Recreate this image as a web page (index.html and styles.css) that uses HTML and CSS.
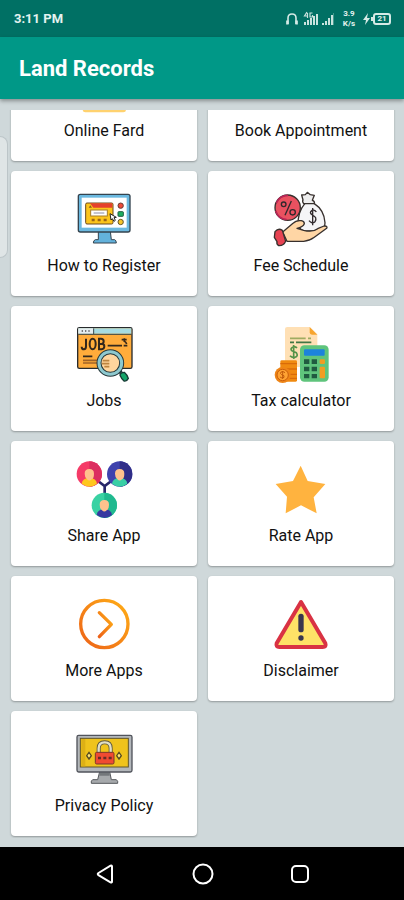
FILE: index.html
```
<!DOCTYPE html>
<html lang="en">
<head>
<meta charset="utf-8">
<meta name="viewport" content="width=device-width, initial-scale=1">
<title>Land Records</title>
<link rel="stylesheet" href="styles.css">
</head>
<body>
<div class="status">
  <span class="time">3:11 PM</span>
  <div class="indicators">
    <svg width="14" height="14" viewBox="0 0 14 14" fill="none" stroke="#d5eae6" stroke-width="1.6"><path d="M3 12V6Q3 2 7 2T11 6V12"/><path d="M2.400 8.500V12.500M11.600 8.500V12.500" stroke-width="2.500"/></svg>
    <svg width="32" height="18" viewBox="0 0 32 18" fill="#c9e3de"><path d="M1 12h2v3H1zM4 10h2v5H4zM7 8h2v7H7zM10 6h2v9h-2zM13 4h2v11h-2zM19 13h2v2h-2zM22 11h2v4h-2zM25 8h2v7h-2zM28 5h2v10h-2z"/><path d="M4 2L1.500 6H5M4.500 3v5M9.500 3H7v4h2.500V5" fill="none" stroke="#c9e3de" stroke-width="1.200"/><path d="M30 3h1v12h-1z" opacity=".35"/></svg>
    <span class="speed">3.9<br>K/s</span>
    <span class="battery"><svg width="10" height="12" viewBox="0 0 10 12" fill="#d5eae6"><path d="M5 0L0 7h3L2 12l5-7H4z"/><path d="M8 4h2v4H8z"/></svg><span class="level">21</span></span>
  </div>
</div>
<header class="appbar"><h1>Land Records</h1></header>
<main class="content">
  <div class="viewport">
    <div class="grid">
      <a class="card" href="#">
        <svg class="icon" viewBox="0 0 240 225"><rect x="56" y="60" width="130" height="142" rx="8" fill="#ffd26f"/></svg>
        <span>Online Fard</span>
      </a>
      <a class="card" href="#">
        <svg class="icon" viewBox="0 0 240 225"><rect x="56" y="60" width="130" height="125" rx="8" fill="#4aa6d8"/></svg>
        <span>Book Appointment</span>
      </a>
      <a class="card" href="#">
        <svg class="icon" viewBox="0 0 240 225">
          <path d="M103 154h36l3 25h10q5 2 5 10H88q0-8 6-10h9z" fill="#63b2dc" stroke="#34434e" stroke-width="3"/>
          <rect x="43" y="43" width="155" height="113" rx="6" fill="#6bb9e0" stroke="#34434e" stroke-width="4"/>
          <rect x="53" y="53" width="135" height="90" fill="#fff"/>
          <rect x="65" y="69" width="82" height="63" rx="4" fill="#fcc51c" stroke="#6a4a20" stroke-width="3"/>
          <path d="M78 70h67v13H88z" fill="#e5402d"/>
          <path d="M74 83l5-7 5 7z" fill="#8b5a17"/>
          <rect x="80" y="90" width="50" height="18" fill="#fff" stroke="#a87e26" stroke-width="3"/>
          <path d="M89 99h32" stroke="#a8a8b8" stroke-width="4"/>
          <path d="M83 120h9M101 120h9M119 120h9" stroke="#9c6515" stroke-width="8"/>
          <path d="M138 101l3 19 4-4 5 8 4-3-4-8 7-1z" fill="#fff" stroke="#222" stroke-width="3"/>
          <circle cx="170" cy="77" r="8" fill="#ee4938" stroke="#663d35" stroke-width="3"/>
          <rect x="162" y="95" width="16" height="14" rx="2" fill="#1caf60" stroke="#205c42" stroke-width="3"/>
          <circle cx="170" cy="126" r="8" fill="#f5c52a" stroke="#67582b" stroke-width="3"/>
        </svg>
        <span>How to Register</span>
      </a>
      <a class="card" href="#">
        <svg class="icon" viewBox="-3 0 240 225">
          <g stroke="#37302d" stroke-width="4" stroke-linejoin="round" stroke-linecap="round">
          <path d="M129 70q-23 27-20 63 4 21 25 20h38q17-3 17-25-2-38-33-58z" fill="#f5f5f7"/>
          <path d="M123 60l-4-15 11-1 6-7 9 7 12 2-6 15q8 2 6 10h-32q-5-7-2-11z" fill="#eee"/>
          <circle cx="77" cy="83" r="38" fill="#e95160"/>
          <path d="M62 156l31-26q9-10 25-8 9 2 9 9-4 10-22 14l20 6q27 7 42-5l19-8q12-1 8 7l-37 27q-15 11-32 12H75z" fill="#ffd6a5"/>
          <path d="M39 155q10-12 22-4l10 33q-6 14-21 13-7-4-5-12l-8-13z" fill="#e74352"/>
          </g>
          <path d="M43 69q10-23 35-23M41 92q7 24 33 27" fill="none" stroke="#b92556" stroke-width="5"/>
          <g fill="none" stroke="#30292c" stroke-width="4"><circle cx="65" cy="73" r="7"/><circle cx="92" cy="97" r="8"/><path d="M88 63L69 106"/><path d="M163 96q-5-8-13-5-10 7 1 14 16 7 8 20-9 8-18-3M152 84v52"/></g>
        </svg>
        <span>Fee Schedule</span>
      </a>
      <a class="card" href="#">
        <svg class="icon" viewBox="0 0 240 225">
          <rect x="41" y="38" width="163" height="122" rx="5" fill="#ffac3b" stroke="#282b2d" stroke-width="4"/>
          <path d="M43 40h159v16H43z" fill="#a7dce2"/><path d="M43 40h46v16H43z" fill="#e5eef1"/>
          <path d="M43 58h159M89 40v17" stroke="#37464a" stroke-width="3"/>
          <path d="M53 48h4M63 48h4M73 48h4" stroke="#555" stroke-width="4"/>
          <g fill="none" stroke="#32271c" stroke-width="6"><path d="M66 71v23q0 9-6 9-7 0-7-8M105 71v32h8q8-1 8-9 0-7-8-7 6-1 6-8 0-8-8-8zM105 87h8"/><ellipse cx="86" cy="87" rx="9" ry="16"/></g>
          <path d="M131 92h43M179 92h11M57 124h28" stroke="#33291e" stroke-width="5"/>
          <path d="M173 74h15M181 70v9q5 2 7 8" fill="none" stroke="#392818" stroke-width="5"/>
          <path d="M57 136h46M57 144h42" stroke="#a16327" stroke-width="5"/>
          <path d="M162 164l10 10" stroke="#26383b" stroke-width="11"/>
          <circle cx="139" cy="144" r="34" fill="#ffd59d" stroke="#26383b" stroke-width="15"/>
          <circle cx="139" cy="144" r="34" fill="none" stroke="#8ec9cf" stroke-width="9"/>
          <path d="M116 137h20M114 146h22M121 155h15" stroke="#bd843f" stroke-width="5"/>
          <path d="M168 181q0-8 13-9 9 8 12 18-5 10-13 8-8-7-12-17z" fill="#15a569" stroke="#173b35" stroke-width="4"/>
        </svg>
        <span>Jobs</span>
      </a>
      <a class="card" href="#">
        <svg class="icon" viewBox="-3 0 240 225">
          <path d="M69 42q0-6 7-6h67l23 22v98H69z" fill="#ffe0b5"/><path d="M143 36l23 23h-16q-7 0-7-7z" fill="#f7a52f"/>
          <path d="M84 70h47M138 70h9" stroke="#9fab61" stroke-width="5"/><path d="M84 82h12M102 82h46" stroke="#427644" stroke-width="5"/>
          <path d="M105 99q-5-5-13-2-8 4-3 10l14 6q7 10-4 14-10 1-15-5M95 90v42" fill="none" stroke="#569348" stroke-width="5"/>
          <rect x="55" y="136" width="50" height="64" rx="4" fill="#f08a10"/><path d="M55 146h50M55 162h50M80 178h25M80 190h25" stroke="#d96b08" stroke-width="4"/>
          <circle cx="62" cy="180" r="24" fill="#ee8517"/><circle cx="62" cy="180" r="17" fill="#ffa333" stroke="#ca5f0b" stroke-width="3"/>
          <path d="M69 173q-5-5-12-2-4 5 2 8 10 2 7 8-7 4-12-1M62 168v24" fill="none" stroke="#c15b0b" stroke-width="3"/>
          <rect x="114" y="91" width="86" height="109" rx="13" fill="#5fc47c"/>
          <rect x="126" y="103" width="62" height="19" rx="3" fill="#1c83dc"/>
          <path d="M126 133h16v14h-16zM149 133h16v14h-16zM126 155h16v14h-16zM149 155h16v14h-16zM126 177h16v13h-16zM149 177h16v13h-16z" fill="#205b40"/>
          <rect x="173" y="133" width="16" height="14" rx="4" fill="#f19d22"/><rect x="173" y="155" width="16" height="35" rx="3" fill="#f19d22"/>
        </svg>
        <span>Tax calculator</span>
      </a>
      <a class="card" href="#">
        <svg class="icon" viewBox="0 0 240 225">
          <path d="M94 87l28 21 28-21M122 104v28" fill="none" stroke="#272668" stroke-width="8"/>
          <circle cx="76" cy="72" r="38" fill="#f53b67"/><path d="M76 34a38 38 0 0 1 0 76z" fill="#dc2e60"/>
          <circle cx="167" cy="72" r="38" fill="#3f42ad"/><path d="M167 34a38 38 0 0 1 0 76z" fill="#302e88"/>
          <circle cx="121" cy="166" r="38" fill="#39d2a3"/><path d="M121 128a38 38 0 0 1 0 76z" fill="#20b98f"/>
          <path d="M53 101q2-17 23-17t23 17q-22 18-46 0z" fill="#ffc71e"/>
          <path d="M144 101q2-17 23-17t23 17q-22 18-46 0z" fill="#39cfa5"/>
          <path d="M98 195q2-17 23-17t23 17q-22 18-46 0z" fill="#3738a0"/>
          <path d="M62 71q0-14 14-14t14 14-7 17q-7 7-14 0-7-5-7-17zM153 71q0-14 14-14t14 14-7 17q-7 7-14 0-7-5-7-17zM107 164q0-14 14-14t14 14-7 17q-7 7-14 0-7-5-7-17z" fill="#ffc28d"/>
        </svg>
        <span>Share App</span>
      </a>
      <a class="card" href="#">
        <svg class="icon" viewBox="-3 0 240 225"><path d="M116 47l21 46 53 9-35 40 9 48-47-24-46 24 4-50-34-38 52-9z" fill="#ffb33f"/></svg>
        <span>Rate App</span>
      </a>
      <a class="card" href="#">
        <svg class="icon" viewBox="0 -15 240 225">
          <defs><linearGradient id="amber" x1="0" y1="1" x2="1" y2="0"><stop offset="0" stop-color="#ed6218"/><stop offset="1" stop-color="#ffae16"/></linearGradient></defs>
          <circle cx="121" cy="102" r="71" fill="none" stroke="url(#amber)" stroke-width="10"/>
          <path d="M106 68l36 35-36 37" fill="none" stroke="url(#amber)" stroke-width="10" stroke-linecap="round" stroke-linejoin="round"/>
        </svg>
        <span>More Apps</span>
      </a>
      <a class="card" href="#">
        <svg class="icon" viewBox="-3 -15 240 225">
          <path d="M117 36L44 160q-3 11 8 11h130q12 0 8-11z" fill="#fee267" stroke="#d93243" stroke-width="12" stroke-linejoin="round"/>
          <rect x="109" y="71" width="16" height="56" rx="8" fill="#39364e"/><circle cx="117" cy="144" r="8" fill="#39364e"/>
        </svg>
        <span>Disclaimer</span>
      </a>
      <a class="card" href="#">
        <svg class="icon" viewBox="192 60 240 225">
          <path d="M299 215h30l5 24h15q6 4 4 11h-79q-2-8 4-11h15z" fill="#a6a9ac" stroke="#55585c" stroke-width="3"/>
          <path d="M299 217h30v10h-31z" fill="#73777b"/>
          <rect x="231" y="106" width="165" height="110" rx="5" fill="#b3b7bb" stroke="#51545c" stroke-width="4"/>
          <rect x="241" y="115" width="144" height="86" fill="#efc31c" stroke="#62562b" stroke-width="3"/>
          <path d="M244 117h12v82h-12z" fill="#ddb015"/>
          <path d="M296 158v-13q0-18 18-18t18 18v13" fill="none" stroke="#5b563e" stroke-width="12"/>
          <path d="M296 158v-13q0-18 18-18t18 18v13" fill="none" stroke="#e1dfc6" stroke-width="7"/>
          <rect x="286" y="157" width="56" height="35" rx="4" fill="#f04a32" stroke="#79372b" stroke-width="3"/>
          <path d="M294 174h9M310 174h9M326 174h9" stroke="#642c27" stroke-width="8"/>
          <path d="M267 157l7 10-7 10-7-10zM357 157l7 10-7 10-7-10z" fill="#ffe776" stroke="#574d25" stroke-width="4"/>
        </svg>
        <span>Privacy Policy</span>
      </a>
    </div>
  </div>
  <div class="edge-handle"></div>
</main>
<nav class="navbar">
  <button aria-label="Back"><svg width="24" height="24" viewBox="0 0 24 24"><path d="M18 4.500V19.500Q18 21 16.500 20.300L4.500 13.200Q3 12 4.500 11L16.500 3.600Q18 3 18 4.500Z"/></svg></button>
  <button aria-label="Home"><svg width="24" height="24" viewBox="0 0 24 24"><circle cx="12" cy="12" r="9.500"/></svg></button>
  <button aria-label="Recents"><svg width="24" height="24" viewBox="0 0 24 24"><rect x="4" y="4" width="16" height="16" rx="4"/></svg></button>
</nav>
</body>
</html>
```
FILE: styles.css
```
* { box-sizing: border-box; }
body {
  margin: 0;
  min-height: 100vh;
  display: flex;
  flex-direction: column;
  background: #cfd8da;
  color: #111;
  font-family: Roboto, "Liberation Sans", sans-serif;
}
.status {
  height: 37px;
  padding: 0 13px 0 14px;
  display: flex;
  align-items: center;
  justify-content: space-between;
  background: #007064;
  color: #e4f3f0;
}
.time { font-size: 13px; font-weight: 700; }
.indicators { display: flex; align-items: center; gap: 4px; }
.speed { font-size: 8px; line-height: 10px; font-weight: 700; text-align: center; margin: 0 4px; }
.battery { display: flex; align-items: center; }
.level {
  width: 18px;
  border: 2px solid #d5eae6;
  border-radius: 3px;
  font-size: 8px;
  line-height: 8px;
  font-weight: 700;
  text-align: center;
}
.appbar {
  height: 62px;
  padding: 2px 19px 0;
  display: flex;
  align-items: center;
  background: #009887;
  color: #fff;
  box-shadow: 0 2px 4px rgba(0, 0, 0, .35);
  z-index: 1;
}
h1 { margin: 0; font-size: 22px; line-height: 28px; font-weight: 700; }
.content { position: relative; flex: 1; padding: 11px 0 9px; }
.viewport { overflow: hidden; padding: 0 10px 2px 11px; }
.grid {
  display: grid;
  grid-template-columns: 1fr 1fr;
  gap: 10px 11px;
  margin-top: -74px;
}
.card {
  display: flex;
  flex-direction: column;
  align-items: center;
  height: 125px;
  padding-top: 9px;
  background: #fff;
  border-radius: 4px;
  box-shadow: 0 1px 2px rgba(0, 0, 0, .3);
  color: inherit;
  text-decoration: none;
  font-size: 16px;
  line-height: 22px;
}
.icon { width: 80px; height: 75px; }
.edge-handle {
  position: absolute;
  left: 0;
  top: 37px;
  width: 8px;
  height: 122px;
  background: #dfe5e6;
  border: 1px solid #bcc5c8;
  border-left: 0;
  border-radius: 0 8px 8px 0;
}
.navbar {
  height: 53px;
  padding: 0 56px 0 58px;
  display: grid;
  grid-template-columns: repeat(3, 1fr);
  place-items: center;
  background: #000;
}
.navbar button { display: flex; padding: 0; border: 0; background: none; }
.navbar svg { fill: none; stroke: #fff; stroke-width: 2; }
```
